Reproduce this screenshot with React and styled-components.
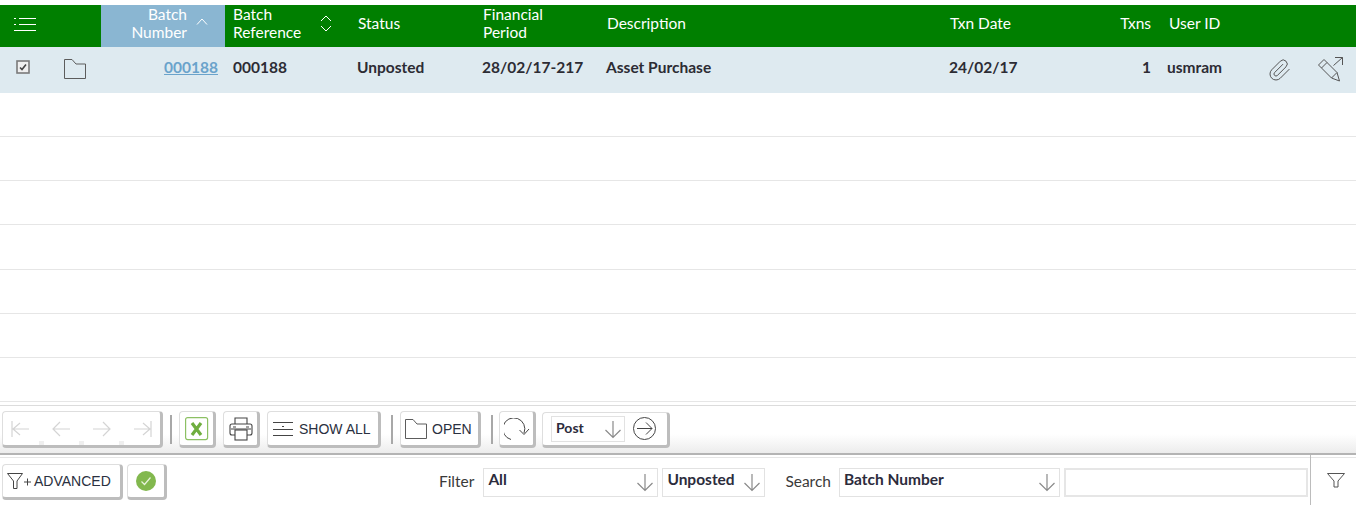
import React from "react";
import styled, { createGlobalStyle } from "styled-components";

const Global = createGlobalStyle`
  html, body { margin: 0; padding: 0; background: #fff; }
  body { font-family: Lato, "Liberation Sans", sans-serif; overflow: hidden; }
`;

const COLS = "50px 51px 124px 125px 125px 124px 343px 150px 68px 96px 52px 48px";

const Page = styled.div`
  width: 1356px;
  height: 505px;
  padding-top: 5px;
  box-sizing: border-box;
  display: flex;
  flex-direction: column;
  overflow: hidden;
`;

const HeaderRow = styled.div`
  display: grid;
  grid-template-columns: ${COLS};
  height: 42px;
  flex: none;
  background: #007f00;
  color: #fff;
  font-size: 15.5px;
  line-height: 18px;
`;

const HeadCell = styled.div`
  display: flex;
  align-items: center;
  justify-content: ${(p) => p.$justify || "flex-start"};
  padding: ${(p) => p.$pad || "0 8px 6px"};
  background: ${(p) => (p.$sorted ? "#8ab6d2" : "transparent")};
  position: relative;
  text-align: ${(p) => p.$align || "left"};
`;

const HeadText = styled.span`
  white-space: pre-line;
`;

const SortIcon = styled.svg`
  position: absolute;
  right: ${(p) => p.$right}px;
  top: ${(p) => p.$top}px;
`;

const DataRow = styled.div`
  display: grid;
  grid-template-columns: ${COLS};
  height: 46px;
  flex: none;
  background: #deeaf0;
  font-size: 15.5px;
  font-weight: 700;
  color: #2c2c34;
`;

const Cell = styled.div`
  display: flex;
  align-items: center;
  justify-content: ${(p) => p.$justify || "flex-start"};
  padding: ${(p) => p.$pad || "0 7px 6px"};
`;

const BatchLink = styled.a`
  color: #6aa3cb;
  text-decoration: underline;
`;

const EmptyRows = styled.div`
  height: 312px;
  flex: none;
`;

const EmptyRow = styled.div`
  height: 43.15px;
  border-bottom: 1px solid #e6e6e6;
`;

const Toolbar = styled.div`
  height: 50px;
  flex: none;
  box-sizing: border-box;
  border-top: 1px solid #dcdcdc;
  border-bottom: 2px solid #b4b4b4;
  background: linear-gradient(#fff 60%, #ececec);
  display: flex;
  align-items: center;
  padding-left: 2px;
  gap: 7px;
`;

const Button = styled.button`
  box-sizing: border-box;
  position: relative;
  height: ${(p) => p.$h || 37}px;
  width: ${(p) => p.$w}px;
  flex: none;
  display: flex;
  align-items: center;
  justify-content: ${(p) => p.$justify || "center"};
  gap: ${(p) => p.$gap || 0}px;
  padding: 0 ${(p) => p.$px || 0}px;
  margin-left: ${(p) => p.$ml || 0}px;
  background: #fff;
  border: 1px solid #dedede;
  border-right: 3px solid #bdbdbd;
  border-bottom: 3px solid #bdbdbd;
  border-radius: 4px;
  font-family: "Liberation Sans", sans-serif;
  font-size: 14px;
  color: #2a3040;
`;

const NavPip = styled.span`
  position: absolute;
  left: ${(p) => p.$left}px;
  bottom: 0;
  width: 5px;
  height: 4px;
  background: #efefef;
`;

const Divider = styled.span`
  width: 2px;
  height: 29px;
  flex: none;
  background: #a8a8a8;
  margin-left: ${(p) => p.$ml || 0}px;
  margin-right: ${(p) => p.$mr || 0}px;
`;

const PostBox = styled.div`
  box-sizing: border-box;
  width: 74px;
  height: 26px;
  border: 1px solid #e2e2e2;
  display: flex;
  align-items: center;
  justify-content: space-between;
  padding: 0 2px 0 4px;
  font-family: Lato, sans-serif;
  font-weight: 700;
  font-size: 14px;
  color: #2c2c3c;
`;

const PostText = styled.span`
  margin-top: -3px;
`;

const FilterBar = styled.div`
  flex: 1;
  display: flex;
  align-items: center;
  padding-left: 2px;
  margin-top: 2px;
  border-top: 1px solid #e6e6e6;
`;

const Spacer = styled.div`
  flex: 1;
`;

const Label = styled.span`
  font-size: 15.5px;
  color: #3a3a3a;
  margin-right: ${(p) => p.$mr}px;
  margin-top: -3px;
`;

const Select = styled.div`
  box-sizing: border-box;
  width: ${(p) => p.$w}px;
  height: 29px;
  flex: none;
  border: 1px solid #e2e2e2;
  margin-right: ${(p) => p.$mr || 0}px;
  display: flex;
  align-items: center;
  justify-content: space-between;
  padding: 0 3px 0 ${(p) => p.$pl || 4}px;
  font-size: 15.5px;
  font-weight: 700;
  color: #2c2c3c;
`;

const SelectText = styled.span`
  margin-top: -6px;
`;

const SearchInput = styled.input`
  box-sizing: border-box;
  width: 244px;
  height: 29px;
  flex: none;
  border: 2px solid #e6e6e6;
  background: #fff;
  outline: none;
`;

const FunnelCell = styled.div`
  width: 46px;
  height: 51px;
  flex: none;
  margin-left: 2px;
  margin-top: -3px;
  padding-left: 4px;
  border-left: 1px solid #bcbcbc;
  display: flex;
  align-items: center;
  justify-content: center;
  box-sizing: border-box;
`;

const NavRow = styled.div`
  display: flex;
  justify-content: space-between;
  width: 100%;
  padding: 0 8px;
  box-sizing: border-box;
`;

const Ico = ({ w, h, children, sw = 1, stroke = "#555" }) => (
  <svg width={w} height={h} viewBox={`0 0 ${w} ${h}`} fill="none" stroke={stroke} strokeWidth={sw}>
    {children}
  </svg>
);

const FolderIcon = ({ w = 22, h = 20 }) => (
  <Ico w={w} h={h} stroke="#5c5c5c">
    <path d={`M.5 ${h - 0.5}V.5H8L12 5H${w - 0.5}V${h - 0.5}Z`} />
  </Ico>
);

const DownArrow = () => (
  <Ico w={18} h={20} stroke="#8a8a8a" sw={1.2}>
    <path d="M9 2V18.500M1.500 11 9 18.500 16.500 11" />
  </Ico>
);

const PageArrow = ({ d }) => (
  <Ico w={18} h={18} stroke="#d4d4d4" sw={1.2}>
    <path d={d} />
  </Ico>
);

const columns = [
  { label: "Batch\nReference", key: "ref" },
  { label: "Status", key: "status" },
  { label: "Financial\nPeriod", key: "period" },
  { label: "Description", key: "desc" },
  { label: "Txn Date", key: "date" },
];

const emptyRows = [1, 2, 3, 4, 5, 6, 7];

export default function App() {
  return (
    <Page>
      <Global />
      <HeaderRow>
        <HeadCell $pad="0 0 4px 14px">
          <Ico w={22} h={14} stroke="#fff">
            <path d="M0 1.500h2M5 1.500h17M0 7.500h2M5 7.500h17M0 13.500h22" />
          </Ico>
        </HeadCell>
        <HeadCell />
        <HeadCell $sorted $justify="flex-end" $pad="0 38px 6px 0" $align="right">
          <HeadText>{"Batch\nNumber"}</HeadText>
          <SortIcon $right={17} $top={13} width="12" height="7" viewBox="0 0 12 7" fill="none" stroke="#fff">
            <path d="M1 6.500 6 1l5 5.500" />
          </SortIcon>
        </HeadCell>
        {columns.map((c) => (
          <HeadCell key={c.key}>
            <HeadText>{c.label}</HeadText>
            {c.key === "ref" && (
              <SortIcon $right={18} $top={10} width="12" height="17" viewBox="0 0 12 17" fill="none" stroke="#fff">
                <path d="M1 6 6 1l5 5M1 11l5 5 5-5" />
              </SortIcon>
            )}
          </HeadCell>
        ))}
        <HeadCell $justify="flex-end" $pad="0 9px 6px 0">Txns</HeadCell>
        <HeadCell $pad="0 9px 6px">User ID</HeadCell>
        <HeadCell />
        <HeadCell />
      </HeaderRow>

      <DataRow>
        <Cell $pad="0 0 6px 16px">
          <Ico w={15} h={15} stroke="#7a7a7a">
            <rect x="1" y="1" width="12" height="12" fill="#efefef" strokeWidth="1.6" />
            <path d="M4 7.500l2 2L10 4.500" stroke="#444" strokeWidth="1.600" />
          </Ico>
        </Cell>
        <Cell $pad="0 0 2px 14px"><FolderIcon /></Cell>
        <Cell $justify="flex-end"><BatchLink>000188</BatchLink></Cell>
        <Cell $pad="0 8px 6px">000188</Cell>
        <Cell>Unposted</Cell>
        <Cell $pad="0 7px 6px">28/02/17-217</Cell>
        <Cell>Asset Purchase</Cell>
        <Cell $pad="0 7px 6px">24/02/17</Cell>
        <Cell $justify="flex-end" $pad="0 9px 6px 0">1</Cell>
        <Cell>usmram</Cell>
        <Cell $pad="0 0 1px 12px">
          <Ico w={24} h={24} stroke="#555">
            <path d="M21.440 11.050l-9.190 9.190a6 6 0 0 1-8.490-8.490l8.570-8.570A4 4 0 1 1 18 8.840l-8.590 8.570a2 2 0 0 1-2.830-2.830l8.490-8.480" />
          </Ico>
        </Cell>
        <Cell $pad="0 0 0 10px">
          <Ico w={26} h={26} stroke="#555">
            <path d="M.5 8 6 2.500 19 15.500 21.500 24 13.500 21ZM3.500 11 9 5.500M13.500 21 19 15.500" />
            <path d="M15.500 8.500 24.500.5M17 .5H24.500V8" />
          </Ico>
        </Cell>
      </DataRow>

      <EmptyRows>
        {emptyRows.map((r) => <EmptyRow key={r} />)}
      </EmptyRows>

      <Toolbar>
        <Button $w={161}>
          <NavRow>
            <PageArrow d="M1 1v16M18 9H2M9 3 2 9l7 6" />
            <PageArrow d="M18 9H1M8 2 1 9l7 7" />
            <PageArrow d="M0 9h17M10 2l7 7-7 7" />
            <PageArrow d="M17 1v16M0 9h16M9 3l7 6-7 6" />
          </NavRow>
          <NavPip $left={36} />
          <NavPip $left={76} />
          <NavPip $left={116} />
        </Button>
        <Divider />
        <Button $w={37}>
          <Ico w={24} h={24} stroke="#8cc063" sw={1.2}>
            <rect x=".6" y=".6" width="22" height="22" rx="2" />
            <path d="M7 6l9 12M16 6l-9 12" stroke="#6fae3f" strokeWidth="3.200" />
          </Ico>
        </Button>
        <Button $w={37}>
          <Ico w={24} h={24} stroke="#444" sw={1.1}>
            <path d="M6 7V1h12v6M6 18H3a2 2 0 0 1-2-2V9a2 2 0 0 1 2-2h18a2 2 0 0 1 2 2v7a2 2 0 0 1-2 2h-3M4 10h3M17 10h3M2 12h20" />
            <rect x="6" y="13" width="12" height="10" fill="#fff" />
          </Ico>
        </Button>
        <Button $w={114} $justify="flex-start" $px={5} $gap={6}>
          <Ico w={20} h={16} stroke="#444">
            <path d="M0 1.500h20M9 5.500h2M0 8.500h20M0 14.500h20" />
          </Ico>
          SHOW ALL
        </Button>
        <Divider $ml={3} />
        <Button $w={81} $justify="flex-start" $px={4} $gap={5}>
          <FolderIcon />
          OPEN
        </Button>
        <Divider $ml={3} $mr={-1} />
        <Button $w={37}>
          <Ico w={26} h={22} stroke="#444">
            <path d="M7 21.500A11 11 0 1 1 20 15M15.500 12 20 16.500 25 11" />
          </Ico>
        </Button>
        <Button $w={128} $h={36} $ml={-1} $justify="flex-start" $px={8} $gap={8}>
          <PostBox>
            <PostText>Post</PostText>
            <DownArrow />
          </PostBox>
          <Ico w={23} h={23} stroke="#444">
            <circle cx="11.500" cy="11.500" r="11" />
            <path d="M4 11.500h15M13 5.500l6 6-6 6" />
          </Ico>
        </Button>
      </Toolbar>

      <FilterBar>
        <Button $w={121} $h={36} $justify="flex-start" $px={4} $gap={3}>
          <Ico w={24} h={18} stroke="#444">
            <path d="M.5 1.500h15L10 9v7.500H6.500V9ZM17 10h7M20.500 6.500v7" />
          </Ico>
          ADVANCED
        </Button>
        <Button $w={40} $h={36} $ml={4}>
          <svg width="20" height="20" viewBox="0 0 20 20" fill="none">
            <circle cx="10" cy="10" r="10" fill="#82b84e" />
            <path d="M5.500 10.500 8.500 13.500 14.500 6.500" stroke="#e8f3dc" strokeWidth="1.200" />
          </svg>
        </Button>
        <Spacer />
        <Label $mr={9}>Filter</Label>
        <Select $w={175} $mr={4}>
          <SelectText>All</SelectText>
          <DownArrow />
        </Select>
        <Select $w={103} $mr={20}>
          <SelectText>Unposted</SelectText>
          <DownArrow />
        </Select>
        <Label $mr={8}>Search</Label>
        <Select $w={221} $mr={4}>
          <SelectText>Batch Number</SelectText>
          <DownArrow />
        </Select>
        <SearchInput />
        <FunnelCell>
          <Ico w={18} h={15} stroke="#555">
            <path d="M.5 .5h17L11 8v6H7V8Z" />
          </Ico>
        </FunnelCell>
      </FilterBar>
    </Page>
  );
}
